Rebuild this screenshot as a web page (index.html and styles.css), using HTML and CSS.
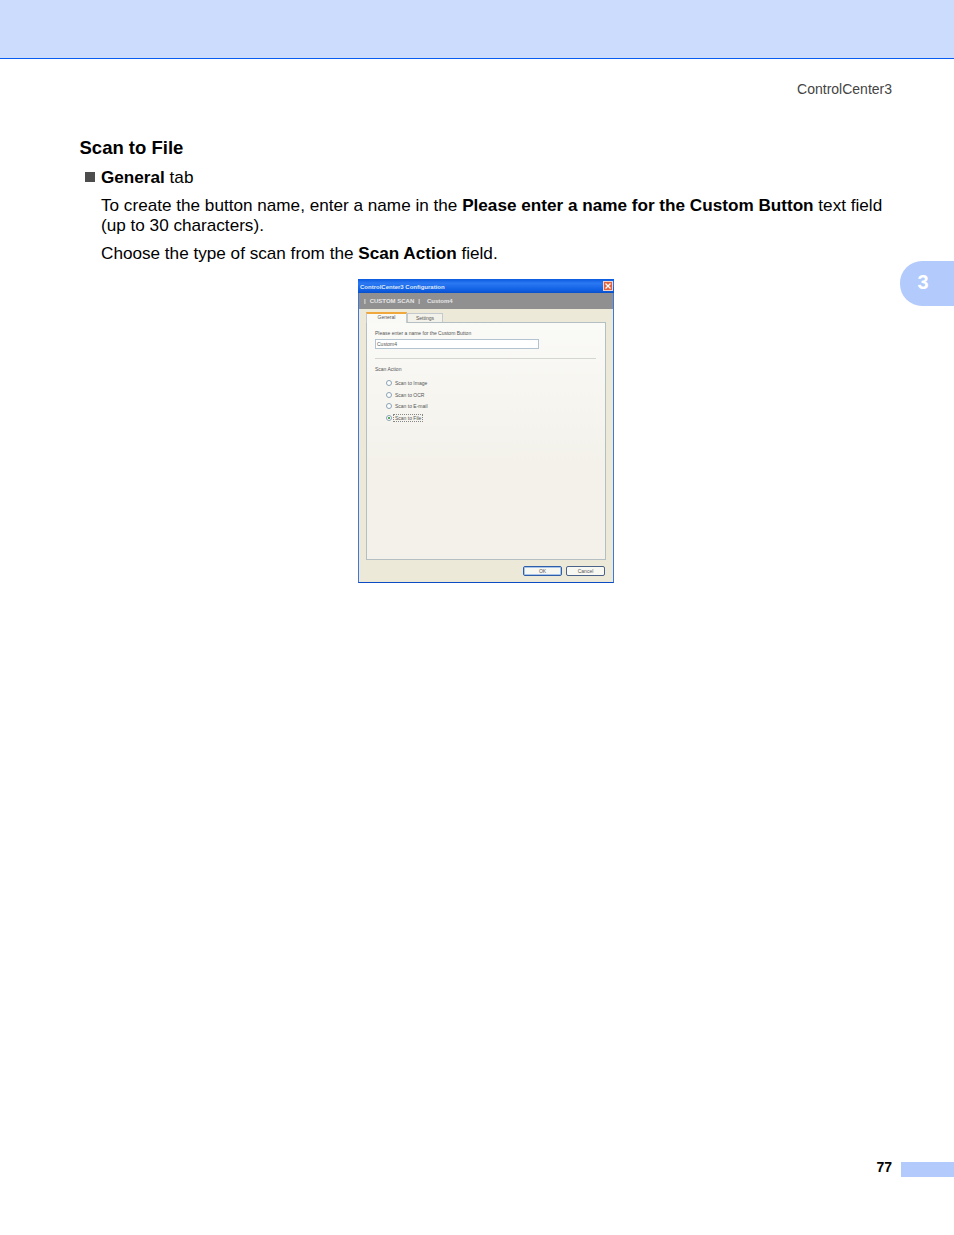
FILE: index.html
```html
<!DOCTYPE html>
<html lang="en">
  <head>
    <meta charset="UTF-8" />
    <title>ControlCenter3</title>
    <link rel="stylesheet" href="styles.css">
  </head>
  <body>
    <div class="top-band"></div>
    <div class="running-head">ControlCenter3</div>

    <div class="content">
      <h2>Scan to File</h2>
      <div class="bullet"><span class="square"></span><span><b>General</b> tab</span></div>
      <div class="para">
        <p>To create the button name, enter a name in the <b>Please enter a name for the Custom Button</b> text field (up to 30 characters).</p>
        <p>Choose the type of scan from the <b>Scan Action</b> field.</p>
      </div>

      <!-- Dialog screenshot -->
      <div class="dialog">
        <div class="titlebar">
          <span class="title-text">ControlCenter3 Configuration</span>
          <span class="close">
            <svg width="8" height="8" viewBox="0 0 8 8"><path d="M1.5 1.5L6.5 6.5M6.5 1.5L1.5 6.5" stroke="#fff" stroke-width="1.3"/></svg>
          </span>
        </div>
        <div class="crumbs">
          <span>|</span><span>CUSTOM SCAN</span><span>|</span><span class="crumb-name">Custom4</span>
        </div>
        <div class="dialog-body">
          <div class="tabs">
            <div class="tab active">General</div>
            <div class="tab">Settings</div>
          </div>
          <div class="panel">
            <div class="field-label">Please enter a name for the Custom Button</div>
            <div class="field">Custom4</div>
            <div class="rule"></div>
            <div class="field-label">Scan Action</div>
            <div class="radios">
              <div class="radio"><span class="dot"></span><span>Scan to Image</span></div>
              <div class="radio"><span class="dot"></span><span>Scan to OCR</span></div>
              <div class="radio"><span class="dot"></span><span>Scan to E-mail</span></div>
              <div class="radio checked"><span class="dot"></span><span class="focus">Scan to File</span></div>
            </div>
          </div>
          <div class="actions">
            <div class="btn default">OK</div>
            <div class="btn">Cancel</div>
          </div>
        </div>
      </div>
    </div>

    <div class="chapter-tab">3</div>

    <div class="footer">
      <span class="page-num">77</span>
      <span class="page-bar"></span>
    </div>
  </body>
</html>
```

FILE: styles.css
```css
* {
  box-sizing: border-box;
}
body {
  margin: 0;
  height: 1235px;
  position: relative;
  display: flex;
  flex-direction: column;
  font-family: "Liberation Sans", Arial, sans-serif;
  background-color: white;
  color: #000;
  overflow: hidden;
}
.top-band {
  height: 59px;
  flex: none;
  background-color: #cbdcfd;
  border-bottom: 1px solid #0a5cf0;
}
.running-head {
  margin-top: 22px;
  padding-right: 62px;
  text-align: right;
  font-size: 14px;
  line-height: 16px;
  color: #444;
}
.content {
  padding: 40px 0 0 79.5px;
}
h2 {
  margin: 0;
  font-size: 18.5px;
  line-height: 22px;
}
.bullet {
  display: flex;
  align-items: center;
  margin: 8px 0 0 5.5px;
  font-size: 17.15px;
  line-height: 20px;
}
.square {
  width: 10px;
  height: 10px;
  margin-right: 6px;
  background-color: #4d4d4d;
}
.para {
  margin: 8px 0 0 21.5px;
  width: 790px;
  font-size: 17.15px;
  line-height: 20px;
}
.para p {
  margin: 0 0 8px;
}

/* dialog */
.dialog {
  width: 256px;
  height: 304px;
  margin: 16px 0 0 278.5px;
  display: flex;
  flex-direction: column;
  background-color: #ece9d8;
  border: 1px solid #3f78d8;
  border-bottom-color: #0a4bc4;
  border-top: none;
  font-size: 5px;
  color: #555;
}
.titlebar {
  height: 14px;
  flex: none;
  margin: 0 -1px;
  padding: 0 1px 0 2px;
  display: flex;
  align-items: center;
  justify-content: space-between;
  background: linear-gradient(#0a5ae0, #2b78f2 30%, #0f5fe4 80%, #0a4fc8);
  color: #dfe9fb;
  font-size: 6px;
  font-weight: bold;
}
.title-text {
  padding-top: 2px;
}
.close {
  width: 10px;
  height: 10px;
  display: flex;
  align-items: center;
  justify-content: center;
  background-color: #e2633f;
  border: 1px solid #f3d5c8;
}
.crumbs {
  height: 16px;
  flex: none;
  padding-left: 5px;
  display: flex;
  align-items: center;
  gap: 4px;
  background-color: #909090;
  color: #e6e6e6;
  font-size: 6px;
  font-weight: bold;
}
.crumb-name {
  margin-left: 3px;
}
.dialog-body {
  flex: 1;
  padding: 3px 7px 0 7px;
  display: flex;
  flex-direction: column;
}
.tabs {
  height: 10px;
  flex: none;
  display: flex;
  align-items: flex-end;
}
.tab {
  width: 36px;
  height: 9px;
  text-align: center;
  line-height: 9px;
  background-color: #f3f2ea;
  border: 1px solid #c3c9cc;
  border-bottom: none;
}
.tab.active {
  width: 41px;
  height: 11px;
  line-height: 7px;
  background-color: #f9f9f5;
  border-top: 2px solid #f0a83c;
  position: relative;
  top: 1px;
}
.panel {
  height: 238px;
  flex: none;
  padding: 6px 9px 0 8px;
  background: linear-gradient(#fafaf7, #f3f1ea 60%);
  border: 1px solid #b4bfc4;
}
.field-label {
  line-height: 8px;
}
.field {
  width: 164px;
  height: 10px;
  margin-top: 2px;
  padding-left: 1px;
  line-height: 8px;
  background-color: white;
  border: 1px solid #b3c3d0;
}
.rule {
  height: 1px;
  margin: 9px 0 6px;
  background-color: #d6d6d0;
}
.radios {
  margin: 6px 0 0 11px;
  display: flex;
  flex-direction: column;
  gap: 3.5px;
}
.radio {
  height: 8px;
  display: flex;
  align-items: center;
  gap: 3px;
}
.dot {
  width: 6px;
  height: 6px;
  flex: none;
  background-color: white;
  border: 1px solid #8aa3b5;
  border-radius: 50%;
}
.radio.checked .dot {
  background: radial-gradient(#5aaa5a 40%, white 45%);
}
.focus {
  margin-left: -1px;
  padding: 0 1px;
  line-height: 6px;
  outline: 1px dotted #888;
  outline-offset: 0;
}
.actions {
  margin-top: 6px;
  display: flex;
  justify-content: flex-end;
  gap: 4px;
  padding-right: 1px;
}
.btn {
  width: 39px;
  height: 10px;
  text-align: center;
  line-height: 8px;
  background-color: #f8f8f3;
  border: 1px solid #4a6288;
  border-radius: 2px;
}
.btn.default {
  border-color: #2f5ea8;
  box-shadow: inset 0 0 0 1px #a9c4ea;
}

/* side tab and footer */
.chapter-tab {
  position: absolute;
  right: 0;
  top: 261px;
  width: 54px;
  height: 45px;
  padding-right: 8px;
  text-align: center;
  line-height: 43px;
  font-size: 20px;
  font-weight: bold;
  color: white;
  background-color: #b2cafc;
  border-radius: 22px 0 0 22px;
}
.footer {
  margin-top: auto;
  padding-bottom: 58px;
  display: flex;
  justify-content: flex-end;
  align-items: center;
  gap: 9px;
}
.page-num {
  font-size: 14px;
  font-weight: bold;
  line-height: 15px;
  position: relative;
  top: -2px;
}
.page-bar {
  width: 53px;
  height: 15px;
  background-color: #b2cafc;
}
```
